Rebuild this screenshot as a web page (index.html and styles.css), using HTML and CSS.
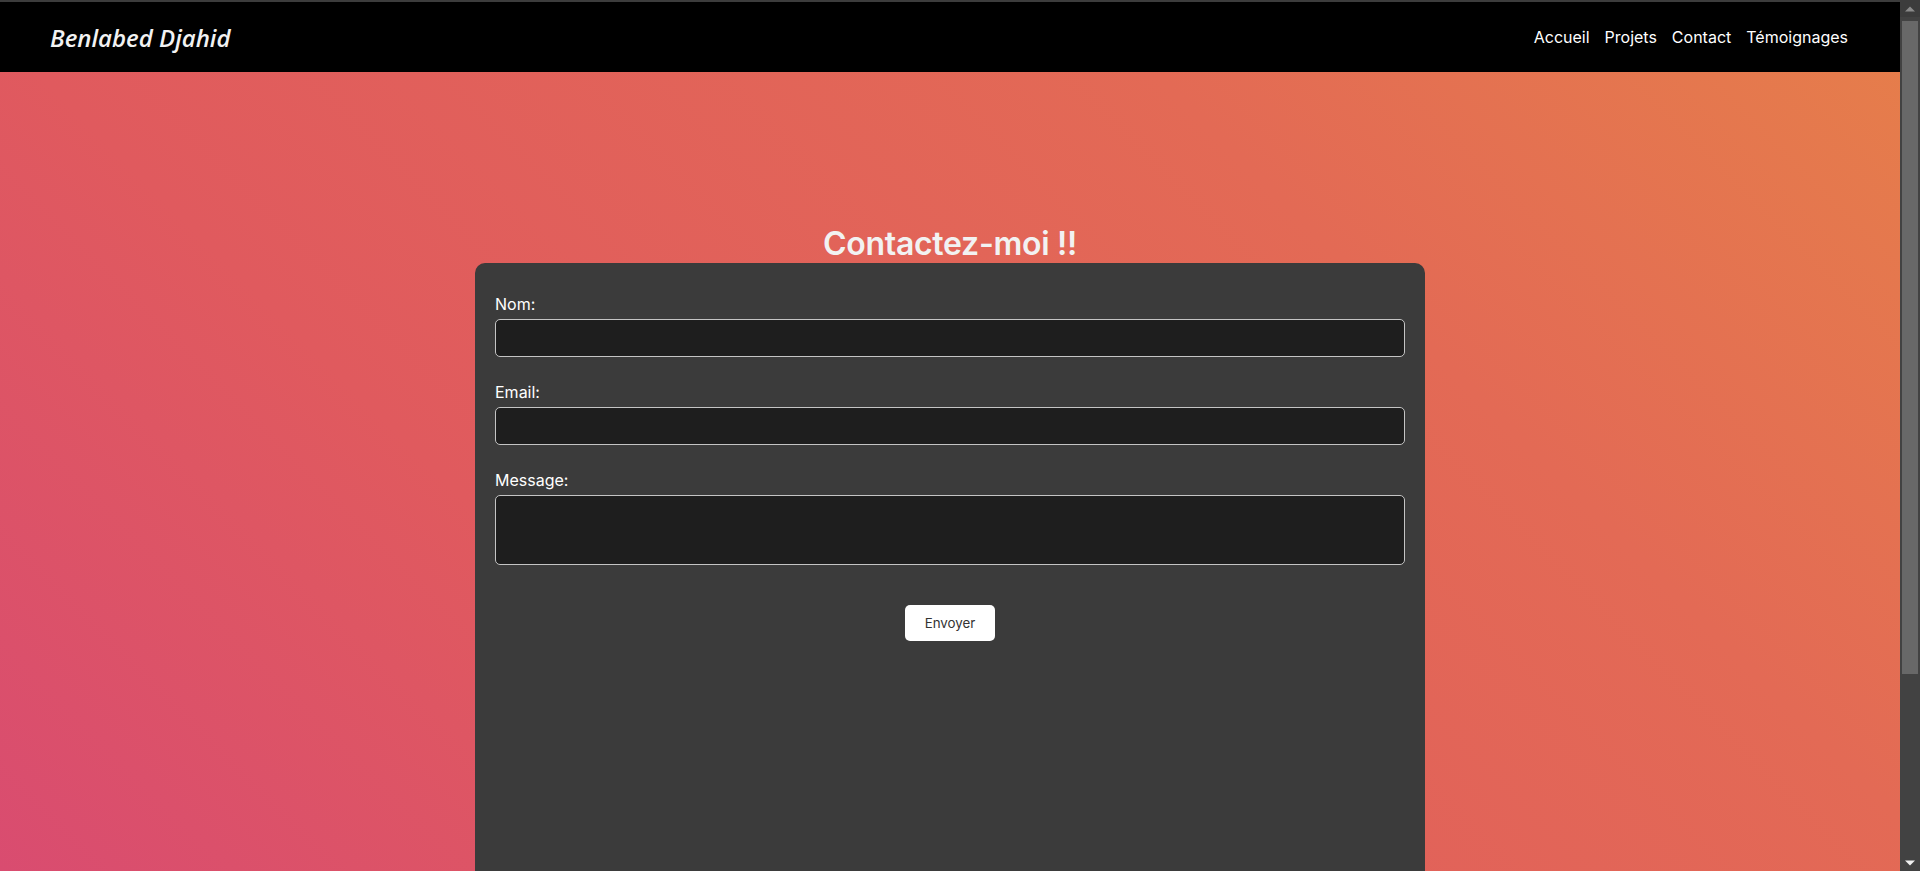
FILE: index.html
```html
<!DOCTYPE html>
<html lang="fr">
<head>
<meta charset="utf-8">
<title>Benlabed Djahid - Contact</title>
<link rel="stylesheet" href="styles.css">
</head>
<body>
<div class="page">
  <header class="site-header">
    <a class="logo" href="#">Benlabed Djahid</a>
    <nav class="nav">
      <a href="#">Accueil</a>
      <a href="#">Projets</a>
      <a href="#">Contact</a>
      <a href="#">Témoignages</a>
    </nav>
  </header>
  <main class="contact">
    <h2 class="contact-title">Contactez-moi !!</h2>
    <form class="contact-card">
      <label for="nom">Nom:</label>
      <input id="nom" type="text">
      <label for="email">Email:</label>
      <input id="email" type="email">
      <label for="message">Message:</label>
      <textarea id="message"></textarea>
      <button type="submit" class="send">Envoyer</button>
    </form>
  </main>
</div>
<div class="scrollbar" aria-hidden="true">
  <div class="sb-btn sb-up">
    <svg width="10" height="6" viewBox="0 0 10 6"><path d="M0 5.5 L5 0.5 L10 5.5 Z" fill="#8a8a8a"/></svg>
  </div>
  <div class="sb-track">
    <div class="sb-thumb"></div>
  </div>
  <div class="sb-btn sb-down">
    <svg width="10" height="6" viewBox="0 0 10 6"><path d="M0 0.5 L10 0.5 L5 5.5 Z" fill="#f0f0f0"/></svg>
  </div>
</div>
</body>
</html>
```
FILE: styles.css
```css
html {
  height: 100%;
  overflow: hidden;
  background: linear-gradient(45deg, #d94c70 0%, #e05a5e 30%, #e36a55 70%, #e67f4a 100%) fixed;
}
body {
  margin: 0;
  height: 100%;
  overflow: hidden;
  display: flex;
  font-family: Inter, "Noto Sans", sans-serif;
  color: #fff;
}
.page {
  flex: 1;
  min-width: 0;
  height: 100vh;
  overflow: hidden;
}
.scrollbar {
  width: 20px;
  height: 100vh;
  flex: none;
  background: #424242;
  display: flex;
  flex-direction: column;
}
.sb-btn {
  height: 17px;
  display: flex;
  align-items: center;
  justify-content: center;
  flex: none;
}
.sb-up {
  background: #3c3c3c;
}
.sb-down {
  height: 16px;
}
.sb-track {
  flex: 1;
  padding: 4px 2px 0;
  display: flex;
  flex-direction: column;
}
.sb-thumb {
  height: 653px;
  background: #686868;
}
.site-header {
  height: 70px;
  border-top: 2px solid #3c3c3c;
  background: #000;
  display: flex;
  align-items: center;
  justify-content: space-between;
  padding: 0 52px 0 50px;
}
.logo {
  font-family: "Open Sans", "Noto Sans", sans-serif;
  font-style: italic;
  font-weight: 600;
  font-size: 24px;
  color: #f2f2f2;
  text-decoration: none;
}
.nav {
  display: flex;
  gap: 15px;
}
.nav a {
  color: #fff;
  text-decoration: none;
  font-size: 16px;
}
.contact {
  padding-top: 152px;
  display: flex;
  flex-direction: column;
  align-items: center;
}
.contact-title {
  margin: 0;
  font-size: 32px;
  font-weight: 600;
  letter-spacing: -0.3px;
  color: #f2f2f2;
}
.contact-card {
  box-sizing: border-box;
  width: 50%;
  min-height: 100vh;
  background: #3b3b3b;
  border-radius: 10px;
  padding: 31px 20px 20px;
  display: flex;
  flex-direction: column;
}
.contact-card label {
  font-size: 16px;
  color: #fff;
  margin-bottom: 5px;
}
.contact-card input,
.contact-card textarea {
  box-sizing: border-box;
  width: 100%;
  height: 38px;
  background: #1e1e1e;
  border: 1px solid #c4c4c4;
  border-radius: 5px;
  color: #fff;
  margin: 0 0 25px;
  font-family: inherit;
  font-size: 16px;
}
.contact-card textarea {
  height: 70px;
  resize: none;
}
.send {
  align-self: center;
  margin-top: 15px;
  width: 90px;
  height: 36px;
  background: #fff;
  color: #333;
  border: none;
  border-radius: 5px;
  font-family: inherit;
  font-size: 13.333px;
}
```
